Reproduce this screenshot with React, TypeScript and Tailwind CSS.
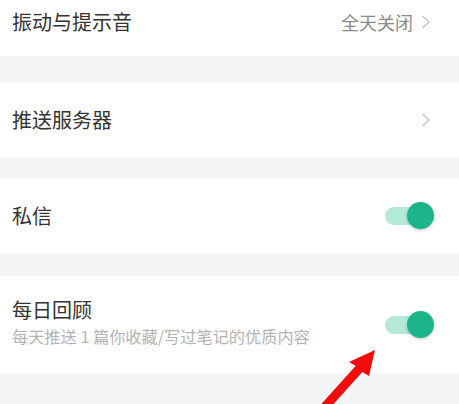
import React from "react";

const Chevron = () => (
  <svg width="10" height="14" viewBox="0 0 10 14" fill="none">
    <path d="M2 1.5 L8 7 L2 12.5" stroke="#c6c6c6" strokeWidth="1.6" strokeLinecap="round" strokeLinejoin="round" />
  </svg>
);

const Toggle = () => (
  <div className="relative w-[49px] h-[27px]">
    <div className="absolute left-0 top-[5px] w-[34px] h-[18px] rounded-full bg-[#b4e8d9]" />
    <div className="absolute right-0 top-0 w-[27px] h-[27px] rounded-full bg-[#1cb58a] shadow-[0_1px_3px_rgba(0,0,0,0.25)]" />
  </div>
);

const Gap = ({ h }: { h: string }) => <div className={`bg-[#f4f5f7] ${h}`} />;

const App = () => {
  return (
    <div
      className="relative w-[459px] h-[404px] overflow-hidden bg-[#f4f5f7] text-[#333333]"
      style={{ fontFamily: '"Noto Sans CJK SC", "Noto Sans", sans-serif' }}
    >
      <div className="flex items-center justify-between h-[56px] pb-[12px] pl-3 pr-[28px] bg-white">
        <span className="text-[20px]">振动与提示音</span>
        <div className="flex items-center gap-[8px]">
          <span className="text-[18px] text-[#8a8a8a]">全天关闭</span>
          <Chevron />
        </div>
      </div>
      <Gap h="h-[26px]" />
      <div className="flex items-center justify-between h-[75px] pl-3 pr-[28px] bg-white">
        <span className="text-[20px]">推送服务器</span>
        <Chevron />
      </div>
      <Gap h="h-[21px]" />
      <div className="flex items-center justify-between h-[75px] pl-3 pr-[25px] bg-white">
        <span className="text-[20px]">私信</span>
        <Toggle />
      </div>
      <Gap h="h-[23px]" />
      <div className="flex items-center justify-between h-[97px] pl-3 pr-[25px] bg-white">
        <div className="flex flex-col -mt-[6px]">
          <span className="text-[20px] leading-[28px]">每日回顾</span>
          <span className="text-[16.2px] leading-[24px] text-[#b3b3b3]">每天推送 1 篇你收藏/写过笔记的优质内容</span>
        </div>
        <Toggle />
      </div>

      <svg className="absolute left-0 top-0" width="459" height="404" viewBox="0 0 459 404">
        <path
          d="M318.6 407 L355.6 366 L349 362 L375 350 L369 376 L362.4 372 L325.4 413 Z"
          fill="#f20d0d"
        />
      </svg>
    </div>
  );
};

export default App;
